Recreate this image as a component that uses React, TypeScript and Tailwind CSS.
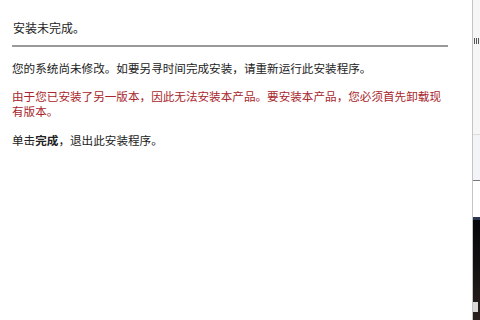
import React from 'react';

const font = { fontFamily: '"Noto Sans CJK SC", "Noto Sans", sans-serif' };

export default function App() {
  return (
    <div className="flex w-[480px] h-[320px] bg-white overflow-hidden" style={font}>
      <div className="w-[472px] shrink-0 pl-[12px] pr-[20px] pt-[19px] text-[#222]">
        <p className="text-[12px] leading-[18px] pl-[1px]">安装未完成。</p>
        <div className="mt-[8px] h-[2px] bg-[#999] w-[436px]" />
        <p className="mt-[14px] text-[11.6px] leading-[15px]">
          您的系统尚未修改。如要另寻时间完成安装，请重新运行此安装程序。
        </p>
        <p className="mt-[13px] text-[11.6px] leading-[15px] text-[#a8262c] w-[440px]">
          由于您已安装了另一版本，因此无法安装本产品。要安装本产品，您必须首先卸载现有版本。
        </p>
        <p className="mt-[14px] text-[11.6px] leading-[15px]">
          单击<span className="font-bold">完成</span>，退出此安装程序。
        </p>
      </div>
      <div className="w-px shrink-0 bg-[#c4c4c4]" />
      <div className="flex-1 flex flex-col bg-[#f6f6f6]">
        <div className="h-[38px]" />
        <div className="h-[6px] ml-[1px] flex gap-px">
          <div className="w-px bg-[#555]" />
          <div className="w-px bg-[#555]" />
          <div className="w-px bg-[#555]" />
        </div>
        <div className="h-[90px]" />
        <div className="h-px bg-[#dcdcdc]" />
        <div className="h-[45px] bg-[#f3f4f7]" />
        <div className="h-px bg-[#777]" />
        <div className="h-[36px] bg-white" />
        <div className="h-[3px] bg-[#2a3550]" />
        <div className="flex-1 flex flex-col justify-end bg-gradient-to-b from-[#05060a] to-[#2a201c]">
          <div className="h-[10px] w-[5px] bg-[#d8d8d8] mb-[8px]" />
        </div>
      </div>
    </div>
  );
}
